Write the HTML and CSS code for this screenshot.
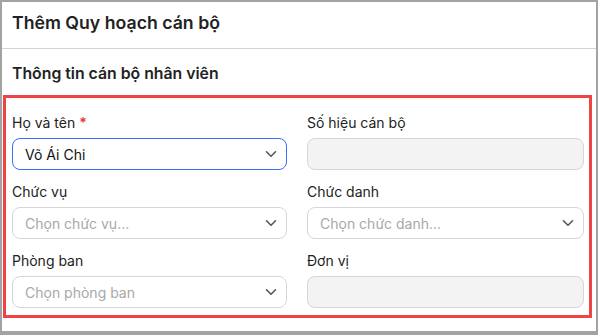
FILE: index.html
```html
<!DOCTYPE html>
<html lang="vi">
<head>
<meta charset="utf-8">
<link rel="stylesheet" href="styles.css">
</head>
<body>
<div class="frame">
  <div class="header">
    <h1 class="title">Thêm Quy hoạch cán bộ</h1>
  </div>
  <div class="body">
    <h2 class="subtitle">Thông tin cán bộ nhân viên</h2>
    <div class="form">
      <div class="field">
        <label class="label">Họ và tên <span class="req">*</span></label>
        <div class="select focused"><span class="value">Võ Ái Chi</span><svg class="chev" viewBox="0 0 12 8" width="12" height="8"><path d="M1.5 1.8 L6 6.2 L10.5 1.8" fill="none" stroke="#555" stroke-width="1.6" stroke-linecap="round" stroke-linejoin="round"/></svg></div>
      </div>
      <div class="field">
        <label class="label">Số hiệu cán bộ</label>
        <div class="input disabled"></div>
      </div>
      <div class="field">
        <label class="label">Chức vụ</label>
        <div class="select"><span class="ph">Chọn chức vụ...</span><svg class="chev" viewBox="0 0 12 8" width="12" height="8"><path d="M1.5 1.8 L6 6.2 L10.5 1.8" fill="none" stroke="#555" stroke-width="1.6" stroke-linecap="round" stroke-linejoin="round"/></svg></div>
      </div>
      <div class="field">
        <label class="label">Chức danh</label>
        <div class="select"><span class="ph">Chọn chức danh...</span><svg class="chev" viewBox="0 0 12 8" width="12" height="8"><path d="M1.5 1.8 L6 6.2 L10.5 1.8" fill="none" stroke="#555" stroke-width="1.6" stroke-linecap="round" stroke-linejoin="round"/></svg></div>
      </div>
      <div class="field">
        <label class="label">Phòng ban</label>
        <div class="select"><span class="ph">Chọn phòng ban</span><svg class="chev" viewBox="0 0 12 8" width="12" height="8"><path d="M1.5 1.8 L6 6.2 L10.5 1.8" fill="none" stroke="#555" stroke-width="1.6" stroke-linecap="round" stroke-linejoin="round"/></svg></div>
      </div>
      <div class="field">
        <label class="label">Đơn vị</label>
        <div class="input disabled"></div>
      </div>
    </div>
  </div>
</div>
</body>
</html>
```

FILE: styles.css
```css
* { box-sizing: border-box; }
html, body { margin: 0; padding: 0; background: #fff; }
body { font-family: Inter, "Noto Sans", sans-serif; color: #1f1f1f; }
.frame {
  width: 598px;
  height: 335px;
  border: 2px solid #a3a3a3;
  border-bottom-width: 4px;
  background: #fff;
  overflow: hidden;
}
.header {
  height: 47px;
  border-bottom: 1px solid #d4d4d4;
  padding: 0 10px;
  display: flex;
  align-items: center;
}
.title {
  margin: 0;
  font-size: 17.7px;
  font-weight: 600;
  color: #222;
  line-height: 24px;
  position: relative;
  top: -2px;
}
.body { padding: 0 4px 0 1px; }
.subtitle {
  margin: 0;
  padding: 14px 0 0 9px;
  height: 46px;
  font-size: 15.8px;
  font-weight: 600;
  color: #222;
  line-height: 22px;
}
.form {
  border: 3px solid #ef4444;
  padding: 15px 5px 7px 6px;
  display: grid;
  grid-template-columns: 275fr 277fr;
  column-gap: 20px;
  row-gap: 12px;
}
.field { display: flex; flex-direction: column; gap: 5px; }
.label { font-size: 14px; line-height: 20px; color: #222; }
.req { color: #e53935; font-weight: 600; }
.select, .input {
  height: 32px;
  border: 1px solid #d6d6d6;
  border-radius: 8px;
  display: flex;
  align-items: center;
  padding: 0 8px 0 12px;
  font-size: 14px;
}
.select { justify-content: space-between; }
.focused { border-color: #3b6ef5; }
.value { color: #111; }
.ph { color: #a8a8a8; }
.chev { flex: none; margin-right: 1px; }
.disabled { background: #f3f3f3; }
```
